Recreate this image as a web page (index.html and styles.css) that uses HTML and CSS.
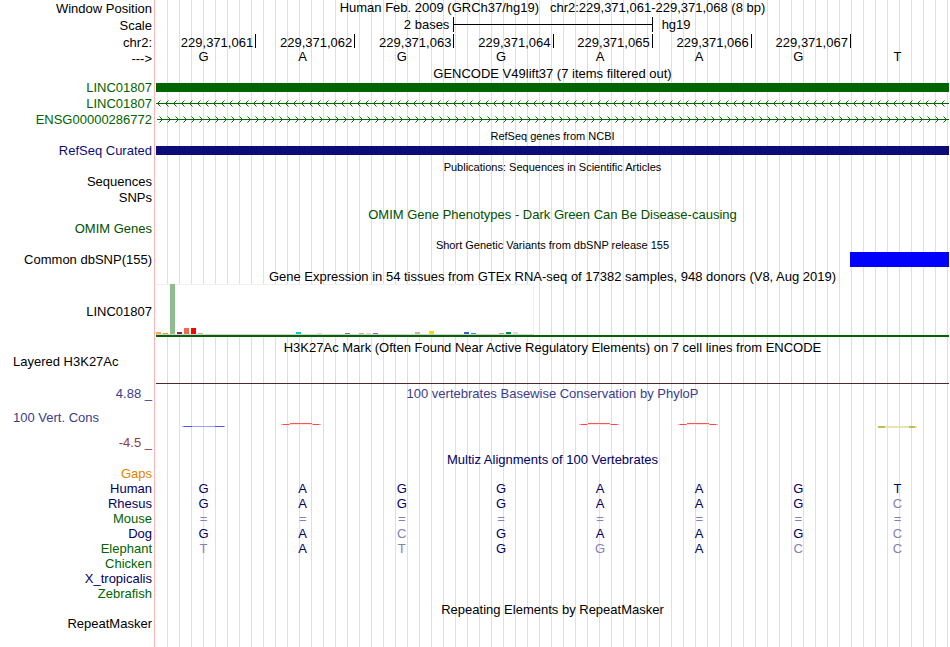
FILE: index.html
```html
<!DOCTYPE html>
<html lang="en">
<head>
    <meta charset="UTF-8">
    <title>Human chr2:229,371,061-229,371,068</title>
    <meta name="viewport" content="width=device-width, initial-scale=1">
    <link rel="stylesheet" href="styles.css">
</head>
<body>
<main class="browser">

    <!-- position and scale -->
    <div class="row ruler">
        <div class="label">Window Position</div>
        <div class="title">Human Feb. 2009 (GRCh37/hg19)&nbsp;&nbsp; chr2:229,371,061-229,371,068 (8 bp)</div>
    </div>
    <div class="row ruler">
        <div class="label">Scale</div>
        <div class="bases scale">
            <span class="scale-size">2 bases</span>
            <span class="scale-bar"></span>
            <span class="scale-db">hg19</span>
        </div>
    </div>
    <div class="row ruler">
        <div class="label">chr2:</div>
        <div class="bases ticks">
            <span>229,371,061</span><span>229,371,062</span><span>229,371,063</span><span>229,371,064</span><span>229,371,065</span><span>229,371,066</span><span>229,371,067</span><span></span>
        </div>
    </div>
    <div class="row">
        <div class="label">---&gt;</div>
        <div class="bases letters">
            <span>G</span><span>A</span><span>G</span><span>G</span><span>A</span><span>A</span><span>G</span><span>T</span>
        </div>
    </div>

    <!-- genes -->
    <div class="row title-row short"><div class="title">GENCODE V49lift37 (7 items filtered out)</div></div>
    <div class="row item green">
        <div class="label">LINC01807</div>
        <div class="bar"></div>
    </div>
    <div class="row item green">
        <div class="label">LINC01807</div>
        <svg class="strand" width="100%" height="15" shape-rendering="crispEdges">
            <defs>
                <pattern id="minus" width="8" height="15" patternUnits="userSpaceOnUse">
                    <path class="line" d="M0 7h8v1h-8z"/>
                    <path class="line" d="M1 7h1v1h-1zM2 6h1v1h-1zM2 8h1v1h-1zM3 5h1v1h-1zM3 9h1v1h-1z"/>
                    <path class="line tip" d="M4 4h1v1h-1zM4 10h1v1h-1z"/>
                </pattern>
            </defs>
            <rect width="100%" height="15" fill="url(#minus)"/>
        </svg>
    </div>
    <div class="row item green">
        <div class="label">ENSG00000286772</div>
        <svg class="strand" width="100%" height="15" shape-rendering="crispEdges">
            <defs>
                <pattern id="plus" width="8" height="15" patternUnits="userSpaceOnUse">
                    <path class="line" d="M0 7h8v1h-8z"/>
                    <path class="line" d="M6 7h1v1h-1zM5 6h1v1h-1zM5 8h1v1h-1zM4 5h1v1h-1zM4 9h1v1h-1z"/>
                    <path class="line tip" d="M3 4h1v1h-1zM3 10h1v1h-1z"/>
                </pattern>
            </defs>
            <rect x="1" width="100%" height="15" fill="url(#plus)"/>
        </svg>
    </div>
    <div class="row title-row small"><div class="title">RefSeq genes from NCBI</div></div>
    <div class="row item navy">
        <div class="label">RefSeq Curated</div>
        <div class="bar"></div>
    </div>

    <!-- publications, phenotypes, variants -->
    <div class="row title-row small"><div class="title">Publications: Sequences in Scientific Articles</div></div>
    <div class="row item"><div class="label">Sequences</div></div>
    <div class="row item"><div class="label">SNPs</div></div>
    <div class="row title-row low omim"><div class="title">OMIM Gene Phenotypes - Dark Green Can Be Disease-causing</div></div>
    <div class="row item omim"><div class="label">OMIM Genes</div></div>
    <div class="row title-row small"><div class="title">Short Genetic Variants from dbSNP release 155</div></div>
    <div class="row item">
        <div class="label">Common dbSNP(155)</div>
        <div class="bases"><span class="variant"></span></div>
    </div>

    <!-- expression -->
    <div class="row title-row tall low"><div class="title">Gene Expression in 54 tissues from GTEx RNA-seq of 17382 samples, 948 donors (V8, Aug 2019)</div></div>
    <div class="row gtex">
        <div class="label">LINC01807</div>
        <div class="gtex-track">
            <svg width="378" height="51" shape-rendering="crispEdges">
                <rect width="378" height="51" fill="#f1f1f1"/>
                <rect y="1" width="377" height="49" fill="#fff"/>
                <rect y="50" width="378" height="1" fill="#d3d3d3"/>
                <rect x="0" y="48" width="5" height="2" fill="#ffa54f"/>
                <rect x="7" y="49" width="5" height="1" fill="#ee9a00"/>
                <rect x="14" y="0" width="5" height="50" fill="#8fbc8f"/>
                <rect x="21" y="48" width="5" height="2" fill="#8b1c62"/>
                <rect x="28" y="44" width="5" height="6" fill="#ee6a50"/>
                <rect x="35" y="44" width="5" height="6" fill="#ff0000"/>
                <rect x="42" y="49" width="5" height="1" fill="#cdb79e"/>
                <rect x="140" y="48" width="5" height="2" fill="#00cdcd"/>
                <rect x="161" y="49" width="5" height="1" fill="#eed5d2"/>
                <rect x="189" y="49" width="5" height="1" fill="#8b7355"/>
                <rect x="203" y="49" width="5" height="1" fill="#cdaa7d"/>
                <rect x="210" y="49" width="5" height="1" fill="#eed5d2"/>
                <rect x="217" y="49" width="5" height="1" fill="#b452cd"/>
                <rect x="259" y="48" width="5" height="2" fill="#cdb79e"/>
                <rect x="273" y="47" width="5" height="3" fill="#ffd700"/>
                <rect x="308" y="48" width="5" height="2" fill="#3a5fcd"/>
                <rect x="315" y="49" width="5" height="1" fill="#1e90ff"/>
                <rect x="343" y="49" width="5" height="1" fill="#a6a6a6"/>
                <rect x="350" y="48" width="5" height="2" fill="#008b45"/>
                <rect x="357" y="48" width="5" height="2" fill="#eed5d2"/>
            </svg>
            <div class="gene-line"></div>
        </div>
    </div>

    <!-- regulation and conservation -->
    <div class="row title-row"><div class="title">H3K27Ac Mark (Often Found Near Active Regulatory Elements) on 7 cell lines from ENCODE</div></div>
    <div class="row layered">
        <div class="label wide">Layered H3K27Ac</div>
        <div class="baseline"></div>
    </div>
    <div class="row title-row phylop">
        <div class="label">4.88 _</div>
        <div class="title">100 vertebrates Basewise Conservation by PhyloP</div>
    </div>
    <div class="row cons phylop">
        <div class="label wide">100 Vert. Cons</div>
        <div class="bases wiggles">
            <svg viewBox="0 0 44 6"><path d="M1 4.500h43" stroke="#9c9cff"/><path d="M3 4.500h8M34 4.500h9" stroke="#5050ff"/></svg>
            <svg viewBox="0 0 44 6"><path d="M1 2.500h40" stroke="#ffa0a0"/><path d="M3 2.500h6M33 2.500h6" stroke="#ff4545"/><path d="M10 1.500h22" stroke="#ff5555"/><path d="M10 2.500h22" stroke="#ffdede"/></svg>
            <i></i>
            <i></i>
            <svg viewBox="0 0 44 6"><path d="M1 2.500h40" stroke="#ffa0a0"/><path d="M3 2.500h6M33 2.500h6" stroke="#ff4545"/><path d="M10 1.500h22" stroke="#ff5555"/><path d="M10 2.500h22" stroke="#ffdede"/></svg>
            <svg viewBox="0 0 44 6"><path d="M1 2.500h40" stroke="#ffa0a0"/><path d="M3 2.500h6M33 2.500h6" stroke="#ff4545"/><path d="M10 1.500h22" stroke="#ff5555"/><path d="M10 2.500h22" stroke="#ffdede"/></svg>
            <i></i>
            <svg viewBox="0 0 44 6"><path d="M3 5h39" stroke="#e6e6b4" stroke-width="2"/><path d="M3 5h7M34 5h6" stroke="#bebe50" stroke-width="2"/></svg>
        </div>
    </div>
    <div class="row phylop-min"><div class="label">-4.5 _</div></div>

    <!-- multiple alignment -->
    <div class="row title-row align-title"><div class="title">Multiz Alignments of 100 Vertebrates</div></div>
    <table class="align">
        <tr class="gaps"><th>Gaps</th><td></td><td></td><td></td><td></td><td></td><td></td><td></td><td></td></tr>
        <tr><th>Human</th><td>G</td><td>A</td><td>G</td><td>G</td><td>A</td><td>A</td><td>G</td><td>T</td></tr>
        <tr><th>Rhesus</th><td>G</td><td>A</td><td>G</td><td>G</td><td>A</td><td>A</td><td>G</td><td class="diff">C</td></tr>
        <tr class="alt"><th>Mouse</th><td class="diff">=</td><td class="diff">=</td><td class="diff">=</td><td class="diff">=</td><td class="diff">=</td><td class="diff">=</td><td class="diff">=</td><td class="diff">=</td></tr>
        <tr><th>Dog</th><td>G</td><td>A</td><td class="diff">C</td><td>G</td><td>A</td><td>A</td><td>G</td><td class="diff">C</td></tr>
        <tr class="alt"><th>Elephant</th><td class="diff">T</td><td>A</td><td class="diff">T</td><td>G</td><td class="diff">G</td><td>A</td><td class="diff">C</td><td class="diff">C</td></tr>
        <tr class="alt"><th>Chicken</th></tr>
        <tr><th>X_tropicalis</th></tr>
        <tr class="alt"><th>Zebrafish</th></tr>
    </table>

    <!-- repeats -->
    <div class="row title-row low"><div class="title">Repeating Elements by RepeatMasker</div></div>
    <div class="row item"><div class="label">RepeatMasker</div></div>

</main>
</body>
</html>
```

FILE: styles.css
```css
body {
    margin: 0;
    background: #fff;
    color: #000;
    font-family: "Liberation Sans", Arial, Helvetica, sans-serif;
    font-size: 13px;
    line-height: 15px;
}

/* red divider after the labels, guide lines every 12px behind the tracks */
.browser {
    box-sizing: border-box;
    min-height: 100vh;
    padding-right: 1px;
    background-image:
        linear-gradient(to right, #fff 154px, #ffb4b4 154px, #ffb4b4 155px, #fff 155px, #fff 157px, transparent 157px),
        repeating-linear-gradient(to right, transparent 0, transparent 11px, #dcdcfa 11px, #dcdcfa 12px);
}

.row {
    display: grid;
    grid-template-columns: 156px minmax(0, 1fr);
    min-height: 15px;
}

.label {
    padding-right: 4px;
    text-align: right;
    white-space: nowrap;
}

.label.wide {
    padding-left: 13px;
    text-align: left;
}

.title {
    grid-column: 2;
    text-align: center;
    white-space: nowrap;
}

.title-row {
    height: 15px;
    line-height: 16px;
}

.title-row.short {
    height: 14px;
    min-height: 0;
}

.title-row.tall {
    height: 16px;
}

.title-row.low {
    line-height: 18px;
}

.small {
    font-size: 11px;
}

.ruler {
    height: 17px;
    line-height: 17px;
}

.ruler .title {
    line-height: 15px;
}

.bases {
    display: grid;
    grid-template-columns: repeat(8, minmax(0, 1fr));
}

.scale {
    height: 15px;
    line-height: 15px;
}

.scale-size {
    grid-column: span 3;
    padding-right: 4px;
    text-align: right;
}

.scale-bar {
    grid-column: span 2;
    border-left: 1px solid #000;
    background: linear-gradient(#000, #000) 0 7px / 100% 1px no-repeat;
}

.scale-db {
    grid-column: span 3;
    padding-left: 9px;
    border-left: 1px solid #000;
}

.ticks {
    grid-template-rows: 14px;
    line-height: 17px;
}

.ticks span {
    padding-right: 2px;
    text-align: right;
}

.ticks span + span {
    border-left: 1px solid #000;
}

.letters {
    line-height: 12px;
}

.letters span {
    padding-right: 4px;
    text-align: center;
}

.item {
    height: 16px;
}

.bar {
    height: 9px;
    margin-top: 3px;
    background: currentColor;
}

.green {
    color: #006400;
}

.navy {
    color: #0c0c78;
}

.omim {
    color: #005000;
}

.strand {
    display: block;
}

.line {
    fill: #006400;
}

.tip {
    opacity: 0.5;
}

.variant {
    grid-column: 8;
    height: 15px;
    background: #00f;
}

.gtex {
    height: 56px;
}

.gtex .label {
    line-height: 55px;
}

.gtex-track svg {
    display: block;
}

.gene-line {
    height: 2px;
    background: #006400;
}

.layered {
    height: 31px;
    line-height: 14px;
}

.baseline {
    height: 28px;
    border-bottom: 1px solid #502828;
}

.phylop {
    color: #3c3c8c;
}

.title-row.phylop {
    line-height: 15px;
}

.cons {
    height: 34px;
    line-height: 34px;
}

.wiggles {
    padding-top: 21px;
}

.wiggles svg {
    width: 44px;
    height: 6px;
    margin-left: 25px;
    fill: none;
}

.phylop-min {
    color: #8c3c3c;
}

.align-title {
    padding-top: 1px;
    color: #000064;
    line-height: 17px;
}

.align {
    width: 100%;
    table-layout: fixed;
    border-collapse: collapse;
    color: #000064;
}

.align th,
.align td {
    height: 15px;
    padding: 0 4px 0 0;
    font-weight: normal;
    text-align: center;
}

.align th {
    width: 152px;
    text-align: right;
}

.align .alt th {
    color: #006400;
}

.align .gaps th {
    color: #e68200;
}

.align .diff {
    color: #8282b4;
}
```
